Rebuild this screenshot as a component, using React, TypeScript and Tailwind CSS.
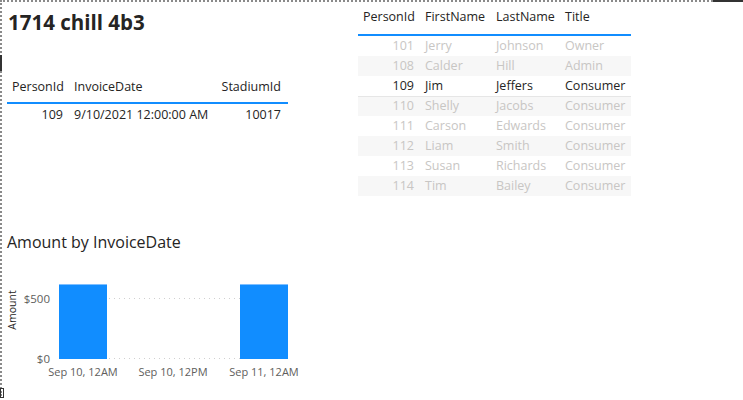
import React from "react";

const font = { fontFamily: "'Segoe UI', 'Open Sans', sans-serif" };

const rows2 = [
  ["101", "Jerry", "Johnson", "Owner", false],
  ["108", "Calder", "Hill", "Admin", false],
  ["109", "Jim", "Jeffers", "Consumer", true],
  ["110", "Shelly", "Jacobs", "Consumer", false],
  ["111", "Carson", "Edwards", "Consumer", false],
  ["112", "Liam", "Smith", "Consumer", false],
  ["113", "Susan", "Richards", "Consumer", false],
  ["114", "Tim", "Bailey", "Consumer", false],
] as const;

function Chart() {
  return (
    <svg width="310" height="130" viewBox="0 260 310 130" className="block">
      <text x="12" y="310" transform="rotate(-90 12 310)" textAnchor="middle" dominantBaseline="central" fontSize="10.5" fill="#252423" style={font}>Amount</text>
      <text x="50" y="298" textAnchor="end" dominantBaseline="central" fontSize="11.5" fill="#605e5c" style={font}>$500</text>
      <text x="50" y="358" textAnchor="end" dominantBaseline="central" fontSize="11.5" fill="#605e5c" style={font}>$0</text>
      <line x1="59" y1="298.5" x2="288" y2="298.5" stroke="#d0d0d0" strokeDasharray="1 4" />
      <line x1="59" y1="358.5" x2="288" y2="358.5" stroke="#d0d0d0" strokeDasharray="1 4" />
      <rect x="59" y="284" width="48" height="75" fill="#118DFF" />
      <rect x="59" y="284" width="48" height="1" fill="#7fbfff" />
      <rect x="240" y="284" width="48" height="75" fill="#118DFF" />
      <rect x="240" y="284" width="48" height="1" fill="#7fbfff" />
      <text x="83" y="371" textAnchor="middle" dominantBaseline="central" fontSize="11" fill="#605e5c" style={font}>Sep 10, 12AM</text>
      <text x="173" y="371" textAnchor="middle" dominantBaseline="central" fontSize="11" fill="#605e5c" style={font}>Sep 10, 12PM</text>
      <text x="264" y="371" textAnchor="middle" dominantBaseline="central" fontSize="11" fill="#605e5c" style={font}>Sep 11, 12AM</text>
    </svg>
  );
}

export default function App() {
  return (
    <div className="relative w-[743px] h-[400px] bg-white overflow-hidden text-[#252423]" style={font}>
      <div className="absolute left-0 top-0 w-[713px] h-[396px] border-t-2 border-l-2 border-dotted border-[#8a8a8a] pointer-events-none" />
      <div className="absolute left-[713px] top-0 w-[30px] h-[2px] bg-[#333]" />
      <div className="absolute left-0 top-[55px] w-[2px] h-[16px] bg-[#333]" />
      <div className="absolute left-0 top-[388px] w-[4px] h-[10px] border border-[#333]" />

      <div className="flex">
        <div className="w-[358px] flex flex-col">
          <div className="pl-[8px] pt-[8px] h-[76px] text-[20.5px] font-bold leading-[28px] text-[#252423] whitespace-nowrap">1714 chill 4b3</div>
          <div className="ml-[7px] w-[281px] text-[12.5px] whitespace-nowrap">
            <div className="flex h-[28px] items-start pt-[2px] leading-[18px] border-b-2 border-[#118DFF]">
              <div className="w-[62px] pl-[5px]">PersonId</div>
              <div className="w-[144px] pl-[5px]">InvoiceDate</div>
              <div className="w-[75px] pr-[7px] text-right">StadiumId</div>
            </div>
            <div className="flex h-[21px] items-end">
              <div className="w-[62px] pr-[6px] text-right">109</div>
              <div className="w-[144px] pl-[5px]">9/10/2021 12:00:00 AM</div>
              <div className="w-[75px] pr-[7px] text-right">10017</div>
            </div>
          </div>
          <div className="mt-[106px] pl-[7px] h-[32px] text-[16px] leading-[22px] text-[#252423] whitespace-nowrap">Amount by InvoiceDate</div>
          <div className="-mt-[3px]"><Chart /></div>
        </div>

        <div className="pt-[7px] w-[273px] text-[12.5px] whitespace-nowrap">
          <div className="flex h-[29px] items-start pt-[1px] leading-[18px] border-b-2 border-[#118DFF]">
            <div className="w-[62px] pl-[5px]">PersonId</div>
            <div className="w-[71px] pl-[5px]">FirstName</div>
            <div className="w-[69px] pl-[5px]">LastName</div>
            <div className="w-[71px] pl-[5px]">Title</div>
          </div>
          {rows2.map((r, i) => (
            <div
              key={r[0]}
              className={
                "flex h-[20px] items-center " +
                (i % 2 === 1 ? "bg-[#f7f7f7] " : "bg-white ") +
                (i === 3 ? "border-t border-[#e6e6e6] " : "") +
                (r[4] ? "text-[#252423]" : "text-[#c8c6c4]")
              }
            >
              <div className="w-[62px] pr-[6px] text-right">{r[0]}</div>
              <div className="w-[71px] pl-[5px]">{r[1]}</div>
              <div className="w-[69px] pl-[5px]">{r[2]}</div>
              <div className="w-[71px] pl-[5px]">{r[3]}</div>
            </div>
          ))}
        </div>
      </div>
    </div>
  );
}
